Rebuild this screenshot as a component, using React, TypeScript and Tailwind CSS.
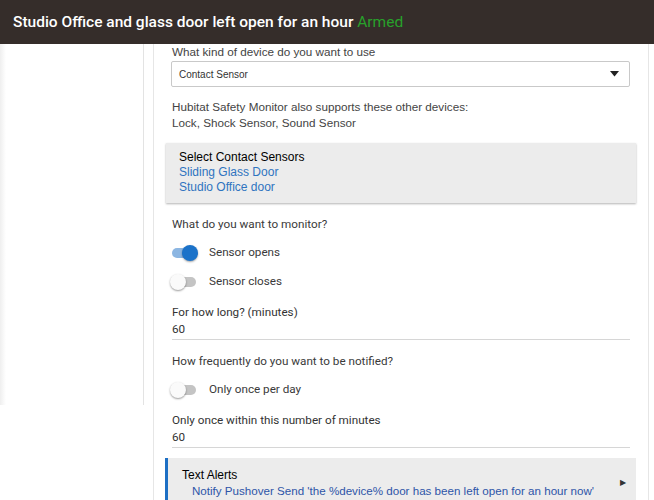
import React from "react";

function Toggle({ on, label }: { on: boolean; label: string }) {
  return (
    <div className="flex h-[29px] items-center">
      <div className="relative ml-[1px] h-[10px] w-[24px]">
        <div
          className={
            on
              ? "h-[10px] w-[24px] rounded-full bg-[#8cb6e2]"
              : "h-[10px] w-[24px] rounded-full bg-[#c4c4c4]"
          }
        />
        <div
          className={
            on
              ? "absolute left-[10px] top-[-3px] h-[16px] w-[16px] rounded-full bg-[#1b72c9] shadow-[0_1px_2px_rgba(0,0,0,0.35)]"
              : "absolute left-[-2px] top-[-3px] h-[16px] w-[16px] rounded-full bg-[#fafafa] shadow-[0_1px_2px_rgba(0,0,0,0.4)]"
          }
        />
      </div>
      <span className="ml-[13px] text-[11.7px] text-[#3a3a3a]">{label}</span>
    </div>
  );
}

function NumberField({ label, value }: { label: string; value: string }) {
  return (
    <div className="mr-[18px]">
      <div className="text-[11.7px] leading-[17px] text-[#333]">{label}</div>
      <div className="border-b border-[#d6d6d6] pb-[1px] text-[11.7px] leading-[17px] text-[#333]">
        {value}
      </div>
    </div>
  );
}

export default function App() {
  return (
    <div className="flex h-[500px] w-[654px] flex-col overflow-hidden bg-white font-['Roboto',sans-serif]">
      <header className="flex h-[44px] shrink-0 items-center bg-[#352d2a] pl-[13px] pt-[1px]">
        <h1 className="text-[15.5px] font-medium text-white">
          Studio Office and glass door left open for an hour{" "}
          <span className="font-normal text-[#28a12a]">Armed</span>
        </h1>
      </header>

      <div className="flex min-h-0 flex-1">
        <aside className="h-[361px] w-[144px] shrink-0 border-r border-[#e3e3e3] bg-[linear-gradient(to_right,#efefef_0px,#ffffff_6px)]" />
        <div className="w-[10px] shrink-0 border-r border-[#e6e6e6]" />

        <main className="w-[495px] shrink-0 border-r border-[#e6e6e6] pl-[17px]">
          <div className="font-['Liberation_Sans',Arial,sans-serif]">
            <div className="pl-[1px] text-[11.7px] leading-[16px] text-[#444]">
              What kind of device do you want to use
            </div>
            <div className="mr-[18px] mt-[1px] flex h-[26px] items-center justify-between rounded-[2px] border border-[#c9c9c9] pl-[7px] pr-[10px]">
              <span className="text-[10px] text-[#333]">Contact Sensor</span>
              <svg width="9" height="6" viewBox="0 0 9 6">
                <path d="M0 0 H9 L4.5 5.5 Z" fill="#222" />
              </svg>
            </div>
            <div className="mt-[12px] pl-[1px] text-[11.7px] leading-[16px] text-[#444]">
              Hubitat Safety Monitor also supports these other devices:
              <br />
              Lock, Shock Sensor, Sound Sensor
            </div>

            <div className="-ml-[5px] mr-[12px] mt-[12px] bg-[#ececec] pb-[8px] pl-[13px] pt-[7px] shadow-[0_1px_2px_rgba(0,0,0,0.3)]">
              <div className="text-[12px] leading-[15px] text-black">Select Contact Sensors</div>
              <div className="text-[12px] leading-[15px] text-[#2f74c0]">Sliding Glass Door</div>
              <div className="text-[12px] leading-[15px] text-[#2f74c0]">Studio Office door</div>
            </div>
          </div>

          <div className="mt-[13px] pl-[1px] text-[11.7px] leading-[17px] text-[#3a3a3a]">
            What do you want to monitor?
          </div>
          <div className="mt-[5px]">
            <Toggle on label="Sensor opens" />
            <Toggle on={false} label="Sensor closes" />
          </div>

          <div className="mt-[8px] pl-[1px]">
            <NumberField label="For how long? (minutes)" value="60" />
          </div>

          <div className="mt-[13px] pl-[1px] text-[11.7px] leading-[17px] text-[#3a3a3a]">
            How frequently do you want to be notified?
          </div>
          <div className="mt-[5px]">
            <Toggle on={false} label="Only once per day" />
          </div>

          <div className="mt-[8px] pl-[1px]">
            <NumberField label="Only once within this number of minutes" value="60" />
          </div>

          <div className="-ml-[6px] mr-[12px] mt-[10px] flex items-center border-l-[3px] border-[#1d6fc4] bg-[#ececec] pb-[6px] pl-[14px] pr-[10px] pt-[10px] font-['Liberation_Sans',Arial,sans-serif]">
            <div className="flex-1">
              <div className="text-[12px] leading-[15px] text-black">Text Alerts</div>
              <div className="pl-[10px] text-[11.6px] leading-[15px] text-[#2e55a8]">
                Notify Pushover Send 'the %device% door has been left open for an hour now'
              </div>
            </div>
            <span className="text-[8px] text-[#333]">▶</span>
          </div>
        </main>
      </div>
    </div>
  );
}
